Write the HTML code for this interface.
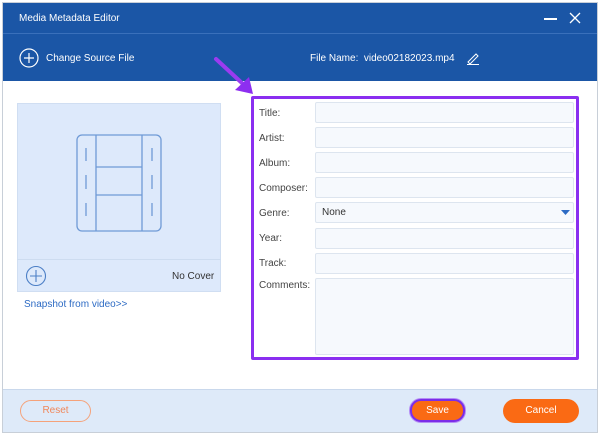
<!DOCTYPE html>
<html><head><style>
*{box-sizing:border-box;margin:0;padding:0}
body{width:600px;height:436px;background:#fff;font-family:"Liberation Sans",sans-serif;font-size:10px;position:relative;overflow:hidden}
.abs{position:absolute}
.win{left:2px;top:2px;width:596px;height:431px;border:1px solid #c8cfd8}
.tb{left:3px;top:3px;width:594px;height:30px;background:#1b56a6;color:#fff;font-size:10px}
.hd{left:3px;top:33px;width:594px;height:48px;background:#1b56a6;border-top:1px solid #3a70bb;color:#fff;font-size:10px}
.lbl{color:#444;font-size:10px;left:259px}
.in{left:315px;width:259px;height:21px;background:#f6f9fd;border:1px solid #dde5ef;border-radius:2px}
.btn{height:22px;border-radius:11px;text-align:center;line-height:20px;font-size:10px}
</style></head><body>
<div class="abs win"></div>
<div class="abs tb"><span class="abs" style="left:16px;top:10px">Media Metadata Editor</span>
<div class="abs" style="left:541px;top:15px;width:13px;height:1.5px;background:#fff"></div>
<svg class="abs" style="left:566px;top:9px" width="12" height="12"><path d="M1 1L11 11M11 1L1 11" stroke="#fff" stroke-width="1.3"/></svg></div>
<div class="abs hd">
<svg class="abs" style="left:16px;top:14px" width="20" height="20"><circle cx="10" cy="10" r="9" fill="none" stroke="#fff" stroke-width="1.2"/><path d="M10 5V15M5 10H15" stroke="#fff" stroke-width="1.2"/></svg>
<span class="abs" style="left:43px;top:19px">Change Source File</span>
<span class="abs" style="left:307px;top:19px">File Name:&nbsp; video02182023.mp4</span>
<svg class="abs" style="left:463px;top:17px" width="14" height="14"><path d="M2 11L10 3L12 5L4 13ZM1 13.5H13" stroke="#fff" fill="none" stroke-width="1"/></svg>
</div>
<svg class="abs" style="left:213px;top:56px" width="45" height="42"><path d="M3 3L30 28" stroke="#9b3bf0" stroke-width="4" stroke-linecap="round"/><path d="M40 38L22 34L36 21Z" fill="#8d2ef0"/></svg>
<div class="abs" style="left:17px;top:103px;width:204px;height:189px;background:#dde9fb;border:1px solid #d0def2"></div>
<div class="abs" style="left:17px;top:259px;width:204px;height:1px;background:#cddcf0"></div>
<svg class="abs" style="left:75px;top:133px" width="88" height="100" fill="none" stroke="#6f9ad6" stroke-width="1.3"><rect x="2" y="2" width="84" height="96" rx="5"/><path d="M21 2V98M67 2V98M21 34H67M21 62H67M11 15V28M11 42V56M11 70V83M77 15V28M77 42V56M77 70V83"/></svg>
<svg class="abs" style="left:25px;top:265px" width="22" height="22" fill="none" stroke="#4c7fc6" stroke-width="1.1"><circle cx="11" cy="11" r="9.5"/><path d="M11 5V17M5 11H17"/></svg>
<span class="abs" style="left:172px;top:271px;color:#333;font-size:10px">No Cover</span>
<span class="abs" style="left:24px;top:299px;color:#2d6bc4;font-size:10px">Snapshot from video&gt;&gt;</span>
<div class="abs" style="left:251px;top:96px;width:328px;height:264px;border:3px solid #8a2ff0;border-radius:2px"></div>
<span class="abs lbl" style="top:108px">Title:</span><div class="abs in" style="top:102px"></div>
<span class="abs lbl" style="top:133px">Artist:</span><div class="abs in" style="top:127px"></div>
<span class="abs lbl" style="top:158px">Album:</span><div class="abs in" style="top:152px"></div>
<span class="abs lbl" style="top:183px">Composer:</span><div class="abs in" style="top:177px"></div>
<span class="abs lbl" style="top:208px">Genre:</span><div class="abs in" style="top:202px"><span class="abs" style="left:6px;top:4px;color:#333;font-size:10px">None</span><svg class="abs" style="left:245px;top:7px" width="9" height="6"><path d="M0 0H9L4.5 5Z" fill="#2d6bc4"/></svg></div>
<span class="abs lbl" style="top:233px">Year:</span><div class="abs in" style="top:228px"></div>
<span class="abs lbl" style="top:258px">Track:</span><div class="abs in" style="top:253px"></div>
<span class="abs lbl" style="top:280px">Comments:</span><div class="abs in" style="top:278px;height:77px"></div>
<div class="abs" style="left:3px;top:389px;width:594px;height:43px;background:#deeaf9;border-top:1px solid #c9d8ec"></div>
<div class="abs btn" style="left:20px;top:400px;width:71px;border:1px solid #f5a27a;color:#f0875a">Reset</div>
<div class="abs btn" style="left:410px;top:399px;width:55px;height:23px;background:#fa6a14;color:#fff;border:2px solid #7b2de8;box-shadow:0 0 0 1px #b48df5">Save</div>
<div class="abs btn" style="left:503px;top:399px;width:76px;height:24px;background:#fa6a14;color:#fff;line-height:24px;border-radius:12px">Cancel</div>
</body></html>
